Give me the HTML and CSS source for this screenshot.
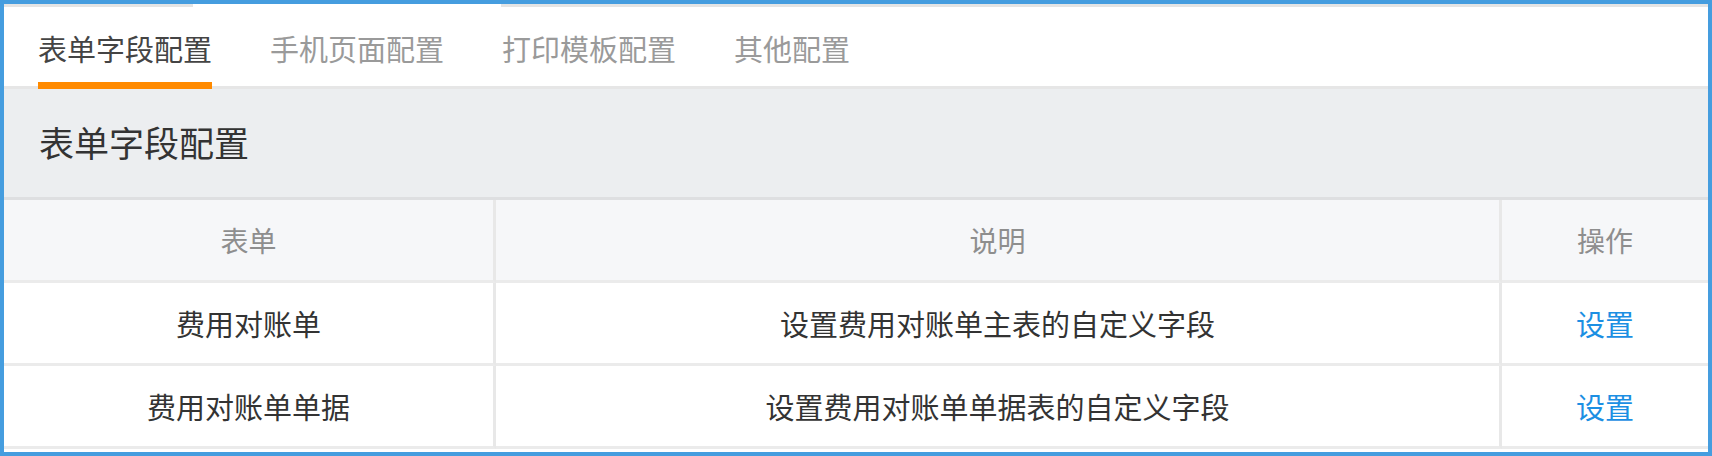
FILE: index.html
```html
<!DOCTYPE html>
<html>
  <head>
    <meta charset="utf-8" />
    <title>表单字段配置</title>
    <link rel="stylesheet" href="styles.css">
  </head>
  <body>
    <div class="frame">
      <div class="top-strip">
        <span class="strip-left"></span>
        <span class="strip-gap"></span>
        <span class="strip-right"></span>
      </div>

      <ul class="tabs">
        <li class="tab active">表单字段配置</li>
        <li class="tab">手机页面配置</li>
        <li class="tab">打印模板配置</li>
        <li class="tab">其他配置</li>
      </ul>

      <div class="section-title">表单字段配置</div>

      <div class="grid">
        <div class="cell head">表单</div>
        <div class="cell head">说明</div>
        <div class="cell head last">操作</div>

        <div class="cell">费用对账单</div>
        <div class="cell">设置费用对账单主表的自定义字段</div>
        <div class="cell last"><a class="link" href="#">设置</a></div>

        <div class="cell">费用对账单单据</div>
        <div class="cell">设置费用对账单单据表的自定义字段</div>
        <div class="cell last"><a class="link" href="#">设置</a></div>
      </div>
    </div>
  </body>
</html>
```

FILE: styles.css
```css
body {
  margin: 0;
  padding: 0;
  font-family: "Noto Sans CJK SC", "Noto Sans", sans-serif;
  background-color: #fff;
}

.frame {
  box-sizing: border-box;
  width: 1712px;
  height: 456px;
  border: 4px solid #459ddf;
  background-color: #fff;
  overflow: hidden;
}

.top-strip {
  display: flex;
  height: 3px;
}

.strip-left {
  width: 189px;
  background-color: #e4e4e4;
}

.strip-gap {
  width: 308px;
}

.strip-right {
  flex: 1;
  background-color: #e4e4e4;
}

.tabs {
  display: flex;
  gap: 58px;
  height: 82px;
  margin: 0;
  padding: 0 0 0 34px;
  list-style-type: none;
  box-shadow: inset 0 -3px #e6e6e6;
}

.tab {
  display: flex;
  align-items: center;
  padding-top: 6px;
  border-bottom: 7px solid transparent;
  font-size: 29px;
  color: #9a9a9a;
}

.tab.active {
  color: #444;
  border-bottom-color: #ff8a00;
}

.section-title {
  display: flex;
  align-items: center;
  height: 104px;
  padding: 0 0 4px 35px;
  background-color: #eceef0;
  border-bottom: 3px solid #dedfe1;
  font-size: 35px;
  color: #333;
}

.grid {
  display: grid;
  grid-template-columns: 492px 1006px 1fr;
}

.cell {
  box-sizing: border-box;
  display: flex;
  align-items: center;
  justify-content: center;
  height: 83px;
  border-right: 3px solid #e8e8e8;
  border-bottom: 3px solid #ebebeb;
  font-size: 29px;
  color: #333;
}

.cell.last {
  border-right: none;
}

.cell.head {
  background-color: #f6f7f9;
  color: #8e8e8e;
  font-size: 28px;
}

.link {
  color: #1c8fe3;
  text-decoration: none;
}
```
